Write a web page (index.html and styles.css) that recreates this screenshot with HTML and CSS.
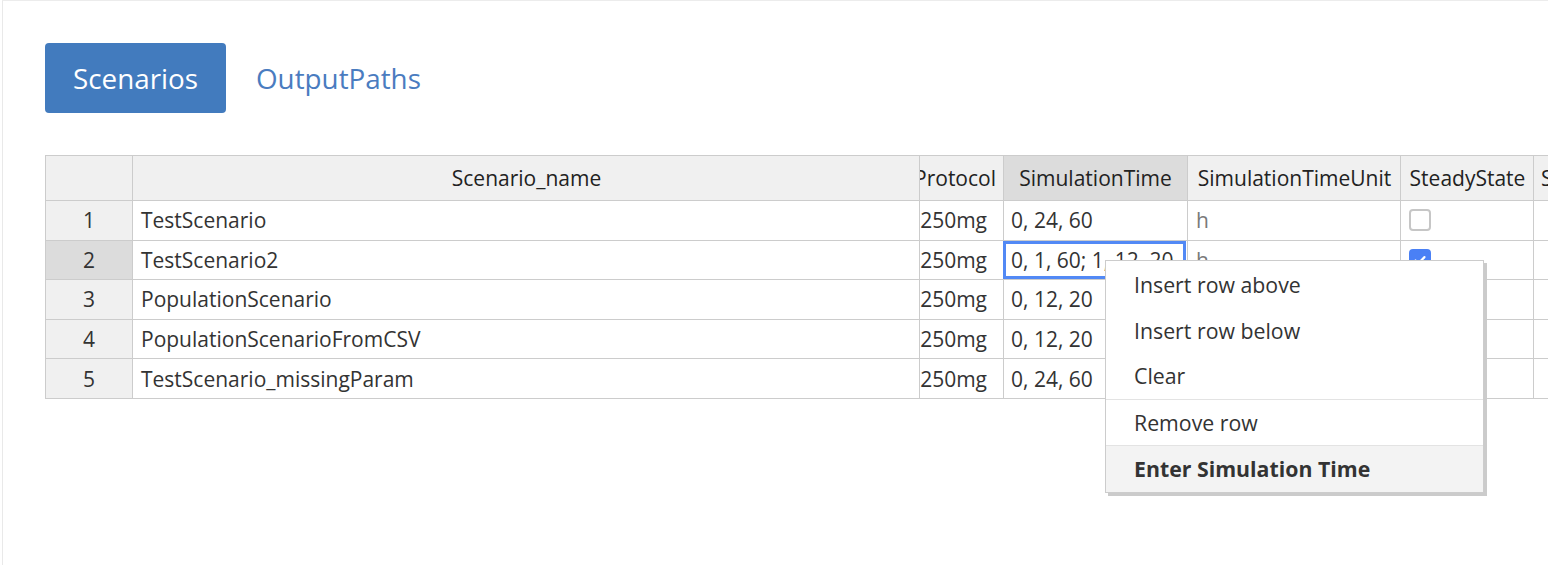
FILE: index.html
```html
<!DOCTYPE html>
<html lang="en">
<head>
<meta charset="utf-8">
<title>Scenarios</title>
<link rel="stylesheet" href="styles.css">
</head>
<body>
<div class="page">
  <nav class="tabs">
    <a class="tab active">Scenarios</a>
    <a class="tab">OutputPaths</a>
  </nav>

  <div class="grid">
    <div class="row head">
      <div class="cell rh"></div>
      <div class="cell c-name center">Scenario_name</div>
      <div class="cell c-proto clip">Protocol</div>
      <div class="cell c-time center hl">SimulationTime</div>
      <div class="cell c-unit center">SimulationTimeUnit</div>
      <div class="cell c-steady center">SteadyState</div>
      <div class="cell c-next">SteadyStateTime</div>
    </div>

    <div class="row">
      <div class="cell rh">1</div>
      <div class="cell c-name">TestScenario</div>
      <div class="cell c-proto clip body">250mg</div>
      <div class="cell c-time">0, 24, 60</div>
      <div class="cell c-unit muted">h</div>
      <div class="cell c-steady"><span class="cb"></span></div>
      <div class="cell c-next"></div>
    </div>

    <div class="row">
      <div class="cell rh hl">2</div>
      <div class="cell c-name">TestScenario2</div>
      <div class="cell c-proto clip body">250mg</div>
      <div class="cell c-time selected">0, 1, 60; 1, 12, 20</div>
      <div class="cell c-unit muted">h</div>
      <div class="cell c-steady"><span class="cb checked"><svg viewBox="0 0 20 20" width="20" height="20"><path d="M5 10.5l3.2 3.2L15 6.8" fill="none" stroke="#fff" stroke-width="2.4" stroke-linecap="round" stroke-linejoin="round"/></svg></span></div>
      <div class="cell c-next"></div>
    </div>

    <div class="row">
      <div class="cell rh">3</div>
      <div class="cell c-name">PopulationScenario</div>
      <div class="cell c-proto clip body">250mg</div>
      <div class="cell c-time">0, 12, 20</div>
      <div class="cell c-unit muted">h</div>
      <div class="cell c-steady"><span class="cb"></span></div>
      <div class="cell c-next"></div>
    </div>

    <div class="row">
      <div class="cell rh">4</div>
      <div class="cell c-name">PopulationScenarioFromCSV</div>
      <div class="cell c-proto clip body">250mg</div>
      <div class="cell c-time">0, 12, 20</div>
      <div class="cell c-unit muted">h</div>
      <div class="cell c-steady"><span class="cb"></span></div>
      <div class="cell c-next"></div>
    </div>

    <div class="row">
      <div class="cell rh">5</div>
      <div class="cell c-name">TestScenario_missingParam</div>
      <div class="cell c-proto clip body">250mg</div>
      <div class="cell c-time">0, 24, 60</div>
      <div class="cell c-unit muted">h</div>
      <div class="cell c-steady"><span class="cb"></span></div>
      <div class="cell c-next"></div>
    </div>
  </div>

  <div class="menu">
    <div class="group first">
      <div class="item">Insert row above</div>
      <div class="item">Insert row below</div>
      <div class="item">Clear</div>
    </div>
    <div class="group">
      <div class="item">Remove row</div>
    </div>
    <div class="group">
      <div class="item strong">Enter Simulation Time</div>
    </div>
  </div>
</div>
</body>
</html>
```

FILE: styles.css
```css
html, body {
  margin: 0;
  padding: 0;
  height: 100%;
  overflow: hidden;
  background: #fff;
}

body {
  font-family: "Open Sans", "Noto Sans", "Liberation Sans", sans-serif;
  color: #333;
}

.page {
  position: relative;
  margin-left: 2px;
  height: 100%;
  box-sizing: border-box;
  border-left: 1px solid #e9e9e9;
  border-top: 1px solid #ececec;
  padding: 42px 0 0 42px;
}

.tabs {
  display: flex;
  gap: 2px;
  height: 70px;
}

.tab {
  display: flex;
  align-items: center;
  padding: 0 28px;
  font-size: 27.8px;
  color: #4a7cc0;
  border-radius: 4px;
  cursor: pointer;
}

.tab.active {
  background: #427bbe;
  color: #fff;
  width: 181px;
  box-sizing: border-box;
  justify-content: center;
  padding: 0;
}

.grid {
  margin-top: 42px;
  width: max-content;
  border-top: 1px solid #ccc;
  font-size: 21px;
  color: #333;
}

.row {
  display: flex;
  height: 39.6px;
}

.row.head {
  height: 45px;
}

.cell {
  box-sizing: border-box;
  border-right: 1px solid #ccc;
  border-bottom: 1px solid #ccc;
  padding: 0 7px;
  display: flex;
  align-items: center;
  white-space: nowrap;
  overflow: hidden;
  position: relative;
  background: #fff;
}

.head .cell {
  background: #f0f0f0;
  color: #222;
}

.cell.center {
  justify-content: center;
}

.cell.rh {
  width: 88px;
  border-left: 1px solid #ccc;
  justify-content: center;
  background: #f0f0f0;
}

.cell.hl,
.head .cell.hl {
  background: #dcdcdc;
}

.c-name { width: 787px; padding-left: 8px; }
.c-proto { width: 84px; }
.c-time { width: 184px; }
.c-unit { width: 213px; padding-left: 8px; }
.c-steady { width: 133px; padding-left: 8px; }
.c-next { width: 160px; padding-left: 7px; }

.cell.clip {
  justify-content: flex-end;
  padding: 0 7px 0 0;
}

.cell.clip.body {
  padding-right: 16px;
}

.muted {
  color: #7a7a7a;
}

.cell.selected {
  overflow: visible;
}

.cell.selected::after {
  content: "";
  position: absolute;
  top: 0;
  bottom: 0;
  left: -1px;
  right: 1px;
  border: 3px solid #5289f5;
  pointer-events: none;
}

.cb {
  display: inline-flex;
  align-items: center;
  justify-content: center;
  width: 22px;
  height: 22px;
  box-sizing: border-box;
  border: 2px solid #c6c6c6;
  border-radius: 4px;
  background: #fff;
}

.cb.checked {
  background: #4a80f5;
  border-color: #4a80f5;
}

.menu {
  position: absolute;
  left: 1102px;
  top: 259px;
  width: 379px;
  box-sizing: border-box;
  background: #fff;
  border: 1px solid #ccc;
  box-shadow: 3px 3px 0 #cbcbcb;
  font-size: 21.3px;
  color: #333;
}

.group + .group {
  border-top: 1px solid #e3e3e3;
}

.group.first {
  padding-top: 1px;
}

.item {
  height: 45.5px;
  display: flex;
  align-items: center;
  padding-left: 28px;
}

.item.strong {
  font-weight: 700;
  background: #f3f3f3;
}
```
